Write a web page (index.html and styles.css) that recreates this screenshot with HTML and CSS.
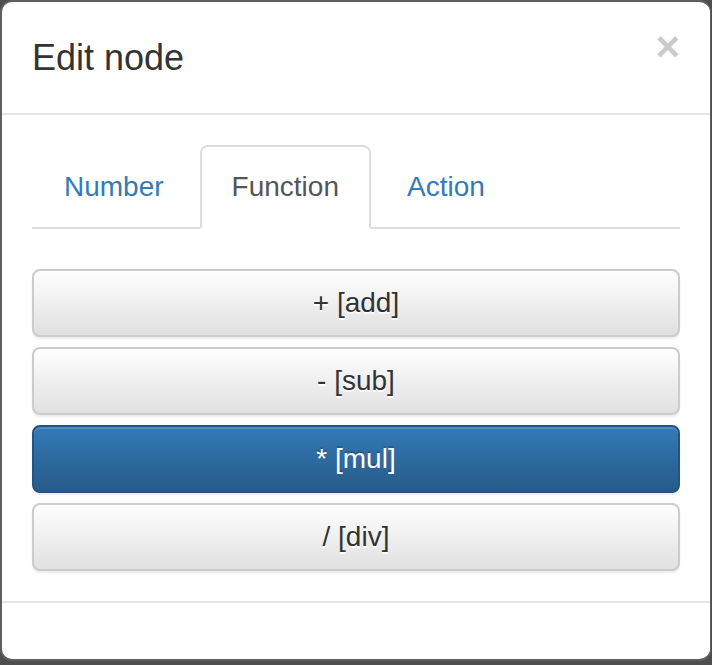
FILE: index.html
```html
<!DOCTYPE html>
<html lang="en">
<head>
<meta charset="utf-8">
<title>Edit node</title>
<link rel="stylesheet" href="styles.css">
</head>
<body>
<div class="modal-content">
  <div class="modal-header">
    <button class="close" type="button" aria-label="Close">×</button>
    <h4 class="modal-title">Edit node</h4>
  </div>
  <div class="modal-body">
    <ul class="nav-tabs">
      <li><a href="#">Number</a></li>
      <li class="active"><a href="#">Function</a></li>
      <li><a href="#">Action</a></li>
    </ul>
    <div class="tab-content">
      <button class="btn btn-default" type="button">+ [add]</button>
      <button class="btn btn-default" type="button">- [sub]</button>
      <button class="btn btn-primary" type="button">* [mul]</button>
      <button class="btn btn-default" type="button">/ [div]</button>
    </div>
  </div>
  <div class="modal-footer"></div>
</div>
</body>
</html>
```

FILE: styles.css
```css
* { box-sizing: border-box; }

html, body {
  margin: 0;
  padding: 0;
  height: 100%;
}

body {
  background: #4e4e4e;
  font-family: "Liberation Sans", Arial, Helvetica, sans-serif;
  font-size: 28px;
  line-height: 40px;
  color: #333;
  overflow: hidden;
}

.modal-content {
  width: 711px;
  background: #fff;
  border: 2px solid #5f5f5f;
  border-right-width: 1px;
  border-radius: 12px;
}

.modal-header {
  padding: 30px;
  border-bottom: 2px solid #e5e5e5;
  display: flex;
  flex-direction: row-reverse;
  justify-content: space-between;
  align-items: flex-start;
}

.modal-title {
  margin: 0;
  font-size: 36px;
  font-weight: normal;
  line-height: 51.4px;
  color: #333;
}

.close {
  margin-top: -6px;
  padding: 0;
  border: 0;
  background: transparent;
  font-family: "Liberation Sans", Arial, sans-serif;
  font-size: 42px;
  font-weight: bold;
  line-height: 42px;
  color: #000;
  opacity: 0.2;
  text-shadow: 0 2px 0 #fff;
  cursor: pointer;
}

.modal-body {
  padding: 30px;
}

.nav-tabs {
  list-style: none;
  margin: 0;
  padding: 0;
  display: flex;
  border-bottom: 2px solid #ddd;
}

.nav-tabs li {
  margin-bottom: -2px;
}

.nav-tabs a {
  display: block;
  margin-right: 4px;
  padding: 20px 30px;
  line-height: 40px;
  border: 2px solid transparent;
  border-radius: 8px 8px 0 0;
  color: #337ab7;
  text-decoration: none;
}

.nav-tabs .active a {
  color: #555;
  background: #fff;
  border-color: #ddd #ddd transparent;
}

.tab-content {
  margin-top: 40px;
  display: flex;
  flex-direction: column;
  gap: 10px;
}

.btn {
  display: block;
  width: 100%;
  padding: 12px 24px;
  font-family: inherit;
  font-size: 28px;
  line-height: 40px;
  text-align: center;
  border: 2px solid transparent;
  border-radius: 8px;
  cursor: pointer;
}

.btn-default {
  color: #333;
  border-color: #ccc;
  background-image: linear-gradient(to bottom, #fff 0, #e0e0e0 100%);
  text-shadow: 0 2px 0 #fff;
  box-shadow: inset 0 2px 0 rgba(255,255,255,.15), 0 2px 2px rgba(0,0,0,.075);
}

.btn-primary {
  color: #fff;
  border-color: #245580;
  background-image: linear-gradient(to bottom, #337ab7 0, #265a88 100%);
  text-shadow: 0 -2px 0 rgba(0,0,0,.2);
  box-shadow: inset 0 2px 0 rgba(255,255,255,.15), 0 2px 2px rgba(0,0,0,.075);
}

.modal-footer {
  padding: 28px 30px;
  border-top: 2px solid #e5e5e5;
  height: 58px;
}
```
